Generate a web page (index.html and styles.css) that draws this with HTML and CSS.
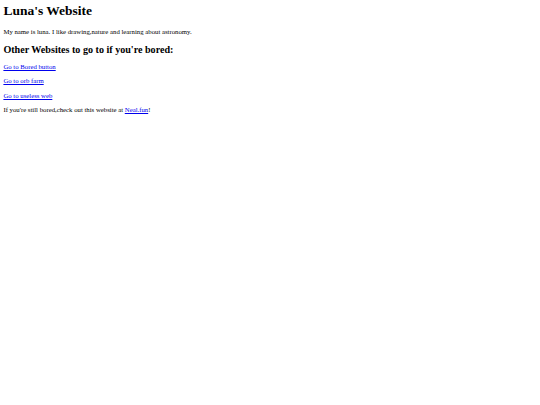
FILE: index.html
```html
<!DOCTYPE html>
<html>
<head>
<meta charset="utf-8">
<title>Luna's Website</title>
<link rel="stylesheet" href="styles.css">
</head>
<body>
<h1 class="title">Luna's Website</h1>
<p class="text">My name is luna. I like drawing,nature and learning about astronomy.</p>
<h2 class="subtitle">Other Websites to go to if you're bored:</h2>
<p class="text"><a href="#">Go to Bored button</a></p>
<p class="text"><a href="#">Go to orb farm</a></p>
<p class="text"><a href="#">Go to useless web</a></p>
<p class="text">If you're still bored,check out this website at <a href="#">Neal.fun</a>!</p>
</body>
</html>
```
FILE: styles.css
```css
html { background: #fff; }
body {
  margin: 3.4px;
  font-family: "Liberation Serif", serif;
  font-size: 6.75px;
  color: #000;
}
.title {
  font-size: 13.5px;
  line-height: 15.5px;
  margin: 0 0 9px;
}
.subtitle {
  font-size: 10.1px;
  line-height: 11.6px;
  margin: 8px 0 7.5px;
}
.text {
  line-height: 7.75px;
  margin: 6.75px 0;
}
a { color: #0000ee; }
```
